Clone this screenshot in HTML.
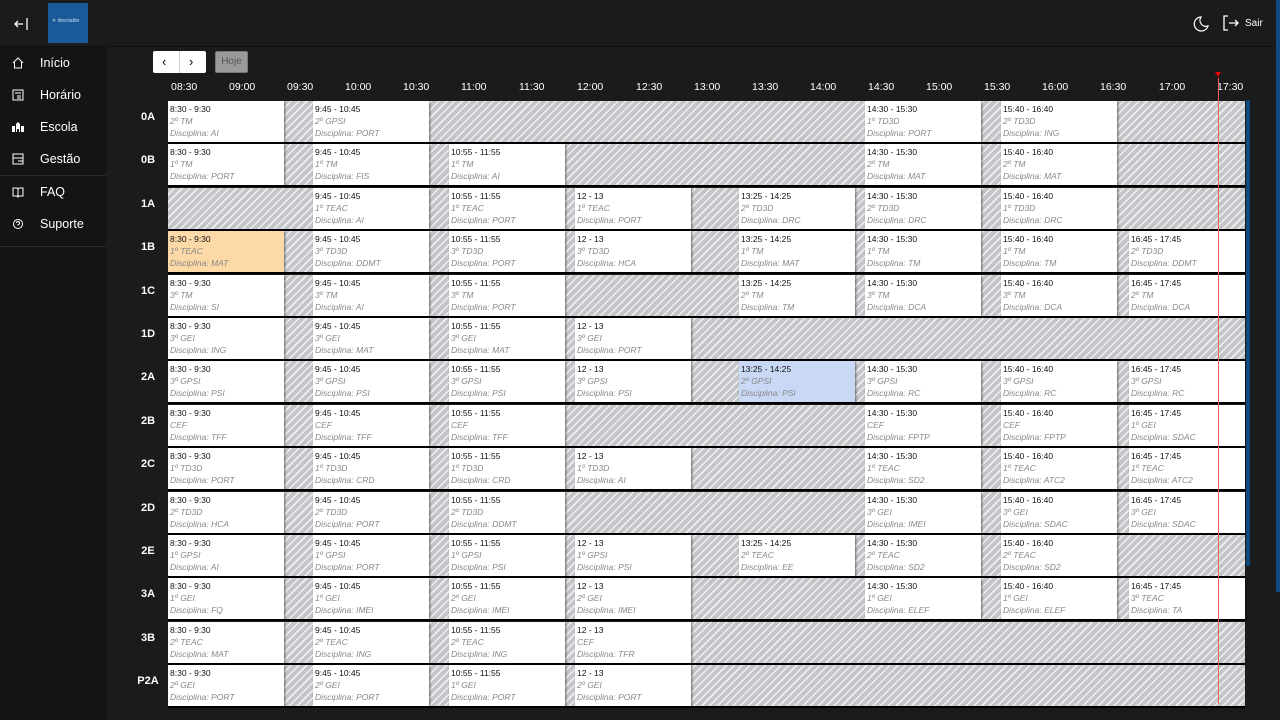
<!DOCTYPE html>
<html><head><meta charset="utf-8"><style>
*{margin:0;padding:0;box-sizing:border-box}
body{width:1280px;height:720px;background:#1b1b1b;font-family:"Liberation Sans",sans-serif;position:relative;overflow:hidden;color:#fff}
.top{position:absolute;left:0;top:0;width:1280px;height:47px;background:#1b1b1b;border-bottom:1px solid #111}
.side{position:absolute;left:0;top:47px;width:106px;height:673px;background:#141414}
.nav{position:absolute;left:0;width:106px;height:32px;font-size:12.5px;color:#fff}
.nav span{position:absolute;left:40px;top:9px}
.nav svg{position:absolute;left:12px;top:10px}
.logo{position:absolute;left:48px;top:3px;width:40px;height:40px;background:#1a5a9a}
.btn{position:absolute;top:51px;height:22px;background:#fff;border-radius:2px}
.tl{position:absolute;top:81px;font-size:10.5px;color:#fff}
.row{position:absolute;left:168px;width:1077px;height:41px;background:repeating-linear-gradient(135deg,#c3c5c8 0 4px,#eef0f2 4px 5.5px);box-shadow:0 2px 0 #000}
.lb{position:absolute;left:128px;width:40px;text-align:center;font-size:11px;font-weight:bold;color:#fff}
.b{position:absolute;top:0;height:41px;width:116px;background:#fff;box-shadow:1px 1px 2px rgba(0,0,0,.5);font-size:8.5px;line-height:12px;padding:2px 0 0 2px;color:#888;font-style:italic;white-space:nowrap;overflow:hidden}
.b b{display:block;color:#111;font-style:normal;font-weight:normal}
.A{left:0}.B{left:145px}.C{left:281px}.D{left:407px}.E{left:571px}.F{left:697px}.G{left:833px}.H{left:961px}
.o{background:#fdd9a8}.u{background:#c9d8f5}
</style></head><body>
<div class="top">
<svg style="position:absolute;left:13px;top:16px" width="16" height="16" viewBox="0 0 16 16" fill="none" stroke="#fff" stroke-width="1.3"><path d="M10 8H2M5 5L2 8l3 3M14 2v12"/></svg>
<div class="logo"><div style="position:absolute;left:4px;top:15px;font-size:5px;color:#cde">✕ directable</div></div>
<svg style="position:absolute;left:1192px;top:15px" width="18" height="18" viewBox="0 0 18 18" fill="none" stroke="#fff" stroke-width="1.2"><path d="M9 2a7 7 0 1 0 7 9A6 6 0 0 1 9 2z"/></svg>
<svg style="position:absolute;left:1223px;top:15px" width="16" height="16" viewBox="0 0 16 16" fill="none" stroke="#fff" stroke-width="1.3"><path d="M5 1H1v14h4M6 8h9M12 5l3 3-3 3"/></svg>
<div style="position:absolute;left:1245px;top:18px;font-size:10px">Sair</div>
</div>
<div class="side">
<div class="nav" style="top:0"><svg width="12" height="12" viewBox="0 0 12 12" fill="none" stroke="#fff"><path d="M1 6L6 1l5 5M2.5 5v6h7V5"/></svg><span>Início</span></div>
<div class="nav" style="top:32px"><svg width="12" height="12" viewBox="0 0 12 12" fill="none" stroke="#fff"><rect x="1" y="1" width="10" height="10"/><path d="M3 4h6M5 7h4M5 9h4"/></svg><span>Horário</span></div>
<div class="nav" style="top:64px"><svg width="12" height="12" viewBox="0 0 12 12" fill="#fff"><path d="M0 5h3v6H0zM9 5h3v6H9zM4 3l2-2 2 2v8H7V8H5v3H4z"/></svg><span>Escola</span></div>
<div class="nav" style="top:96px"><svg width="12" height="12" viewBox="0 0 12 12" fill="none" stroke="#fff"><rect x="1" y="1" width="10" height="10"/><path d="M1 5h10M6 8h5"/></svg><span>Gestão</span></div>
<div style="position:absolute;left:0;top:128px;width:106px;height:1px;background:#2a2a2a"></div>
<div class="nav" style="top:129px"><svg width="12" height="12" viewBox="0 0 12 12" fill="none" stroke="#fff"><path d="M1 2h4l1 1 1-1h4v8H7l-1 1-1-1H1zM6 3v8"/></svg><span>FAQ</span></div>
<div class="nav" style="top:161px"><svg width="12" height="12" viewBox="0 0 12 12" fill="none" stroke="#fff"><circle cx="6" cy="6" r="4.5"/><path d="M4.5 5a1.5 1.5 0 1 1 1.5 1.5V7.5"/></svg><span>Suporte</span></div>
<div style="position:absolute;left:0;top:199px;width:106px;height:1px;background:#2a2a2a"></div>
</div>
<div class="btn" style="left:153px;width:53px"><div style="position:absolute;left:26px;top:0;width:1px;height:22px;background:#ccc"></div><span style="position:absolute;left:9px;top:3px;color:#000;font-size:13px">‹</span><span style="position:absolute;left:36px;top:3px;color:#000;font-size:13px">›</span></div>
<div class="btn" style="left:215px;width:33px;background:#9a9a9a;border:1px solid #777;font-size:10px;color:#555;text-align:center;line-height:20px">Hoje</div>
<div class="tl" style="left:171px">08:30</div><div class="tl" style="left:229px">09:00</div><div class="tl" style="left:287px">09:30</div><div class="tl" style="left:345px">10:00</div><div class="tl" style="left:403px">10:30</div><div class="tl" style="left:461px">11:00</div><div class="tl" style="left:519px">11:30</div><div class="tl" style="left:577px">12:00</div><div class="tl" style="left:636px">12:30</div><div class="tl" style="left:694px">13:00</div><div class="tl" style="left:752px">13:30</div><div class="tl" style="left:810px">14:00</div><div class="tl" style="left:868px">14:30</div><div class="tl" style="left:926px">15:00</div><div class="tl" style="left:984px">15:30</div><div class="tl" style="left:1042px">16:00</div><div class="tl" style="left:1100px">16:30</div><div class="tl" style="left:1159px">17:00</div><div class="tl" style="left:1217px">17:30</div>
<div style="position:absolute;left:1215px;top:72px;width:0;height:0;border-left:3.5px solid transparent;border-right:3.5px solid transparent;border-top:5px solid #e00"></div>

<div class="lb" style="top:111px">0A</div>
<div class="row" style="top:101px">
<div class="b A"><b>8:30 - 9:30</b>2º TM<br>Disciplina: AI</div>
<div class="b B"><b>9:45 - 10:45</b>2º GPSI<br>Disciplina: PORT</div>
<div class="b F"><b>14:30 - 15:30</b>1º TD3D<br>Disciplina: PORT</div>
<div class="b G"><b>15:40 - 16:40</b>2º TD3D<br>Disciplina: ING</div>
</div>
<div class="lb" style="top:154px">0B</div>
<div class="row" style="top:144px">
<div class="b A"><b>8:30 - 9:30</b>1º TM<br>Disciplina: PORT</div>
<div class="b B"><b>9:45 - 10:45</b>1º TM<br>Disciplina: FIS</div>
<div class="b C"><b>10:55 - 11:55</b>1º TM<br>Disciplina: AI</div>
<div class="b F"><b>14:30 - 15:30</b>2º TM<br>Disciplina: MAT</div>
<div class="b G"><b>15:40 - 16:40</b>2º TM<br>Disciplina: MAT</div>
</div>
<div class="lb" style="top:198px">1A</div>
<div class="row" style="top:188px">
<div class="b B"><b>9:45 - 10:45</b>1º TEAC<br>Disciplina: AI</div>
<div class="b C"><b>10:55 - 11:55</b>1º TEAC<br>Disciplina: PORT</div>
<div class="b D"><b>12 - 13</b>1º TEAC<br>Disciplina: PORT</div>
<div class="b E"><b>13:25 - 14:25</b>2º TD3D<br>Disciplina: DRC</div>
<div class="b F"><b>14:30 - 15:30</b>2º TD3D<br>Disciplina: DRC</div>
<div class="b G"><b>15:40 - 16:40</b>1º TD3D<br>Disciplina: DRC</div>
</div>
<div class="lb" style="top:241px">1B</div>
<div class="row" style="top:231px">
<div class="b A o"><b>8:30 - 9:30</b>1º TEAC<br>Disciplina: MAT</div>
<div class="b B"><b>9:45 - 10:45</b>3º TD3D<br>Disciplina: DDMT</div>
<div class="b C"><b>10:55 - 11:55</b>3º TD3D<br>Disciplina: PORT</div>
<div class="b D"><b>12 - 13</b>3º TD3D<br>Disciplina: HCA</div>
<div class="b E"><b>13:25 - 14:25</b>1º TM<br>Disciplina: MAT</div>
<div class="b F"><b>14:30 - 15:30</b>1º TM<br>Disciplina: TM</div>
<div class="b G"><b>15:40 - 16:40</b>1º TM<br>Disciplina: TM</div>
<div class="b H"><b>16:45 - 17:45</b>2º TD3D<br>Disciplina: DDMT</div>
</div>
<div class="lb" style="top:285px">1C</div>
<div class="row" style="top:275px">
<div class="b A"><b>8:30 - 9:30</b>3º TM<br>Disciplina: SI</div>
<div class="b B"><b>9:45 - 10:45</b>3º TM<br>Disciplina: AI</div>
<div class="b C"><b>10:55 - 11:55</b>3º TM<br>Disciplina: PORT</div>
<div class="b E"><b>13:25 - 14:25</b>2º TM<br>Disciplina: TM</div>
<div class="b F"><b>14:30 - 15:30</b>3º TM<br>Disciplina: DCA</div>
<div class="b G"><b>15:40 - 16:40</b>3º TM<br>Disciplina: DCA</div>
<div class="b H"><b>16:45 - 17:45</b>2º TM<br>Disciplina: DCA</div>
</div>
<div class="lb" style="top:328px">1D</div>
<div class="row" style="top:318px">
<div class="b A"><b>8:30 - 9:30</b>3º GEI<br>Disciplina: ING</div>
<div class="b B"><b>9:45 - 10:45</b>3º GEI<br>Disciplina: MAT</div>
<div class="b C"><b>10:55 - 11:55</b>3º GEI<br>Disciplina: MAT</div>
<div class="b D"><b>12 - 13</b>3º GEI<br>Disciplina: PORT</div>
</div>
<div class="lb" style="top:371px">2A</div>
<div class="row" style="top:361px">
<div class="b A"><b>8:30 - 9:30</b>3º GPSI<br>Disciplina: PSI</div>
<div class="b B"><b>9:45 - 10:45</b>3º GPSI<br>Disciplina: PSI</div>
<div class="b C"><b>10:55 - 11:55</b>3º GPSI<br>Disciplina: PSI</div>
<div class="b D"><b>12 - 13</b>3º GPSI<br>Disciplina: PSI</div>
<div class="b E u"><b>13:25 - 14:25</b>2º GPSI<br>Disciplina: PSI</div>
<div class="b F"><b>14:30 - 15:30</b>3º GPSI<br>Disciplina: RC</div>
<div class="b G"><b>15:40 - 16:40</b>3º GPSI<br>Disciplina: RC</div>
<div class="b H"><b>16:45 - 17:45</b>3º GPSI<br>Disciplina: RC</div>
</div>
<div class="lb" style="top:415px">2B</div>
<div class="row" style="top:405px">
<div class="b A"><b>8:30 - 9:30</b>CEF<br>Disciplina: TFF</div>
<div class="b B"><b>9:45 - 10:45</b>CEF<br>Disciplina: TFF</div>
<div class="b C"><b>10:55 - 11:55</b>CEF<br>Disciplina: TFF</div>
<div class="b F"><b>14:30 - 15:30</b>CEF<br>Disciplina: FPTP</div>
<div class="b G"><b>15:40 - 16:40</b>CEF<br>Disciplina: FPTP</div>
<div class="b H"><b>16:45 - 17:45</b>1º GEI<br>Disciplina: SDAC</div>
</div>
<div class="lb" style="top:458px">2C</div>
<div class="row" style="top:448px">
<div class="b A"><b>8:30 - 9:30</b>1º TD3D<br>Disciplina: PORT</div>
<div class="b B"><b>9:45 - 10:45</b>1º TD3D<br>Disciplina: CRD</div>
<div class="b C"><b>10:55 - 11:55</b>1º TD3D<br>Disciplina: CRD</div>
<div class="b D"><b>12 - 13</b>1º TD3D<br>Disciplina: AI</div>
<div class="b F"><b>14:30 - 15:30</b>1º TEAC<br>Disciplina: SD2</div>
<div class="b G"><b>15:40 - 16:40</b>1º TEAC<br>Disciplina: ATC2</div>
<div class="b H"><b>16:45 - 17:45</b>1º TEAC<br>Disciplina: ATC2</div>
</div>
<div class="lb" style="top:502px">2D</div>
<div class="row" style="top:492px">
<div class="b A"><b>8:30 - 9:30</b>2º TD3D<br>Disciplina: HCA</div>
<div class="b B"><b>9:45 - 10:45</b>2º TD3D<br>Disciplina: PORT</div>
<div class="b C"><b>10:55 - 11:55</b>2º TD3D<br>Disciplina: DDMT</div>
<div class="b F"><b>14:30 - 15:30</b>3º GEI<br>Disciplina: IMEI</div>
<div class="b G"><b>15:40 - 16:40</b>3º GEI<br>Disciplina: SDAC</div>
<div class="b H"><b>16:45 - 17:45</b>3º GEI<br>Disciplina: SDAC</div>
</div>
<div class="lb" style="top:545px">2E</div>
<div class="row" style="top:535px">
<div class="b A"><b>8:30 - 9:30</b>1º GPSI<br>Disciplina: AI</div>
<div class="b B"><b>9:45 - 10:45</b>1º GPSI<br>Disciplina: PORT</div>
<div class="b C"><b>10:55 - 11:55</b>1º GPSI<br>Disciplina: PSI</div>
<div class="b D"><b>12 - 13</b>1º GPSI<br>Disciplina: PSI</div>
<div class="b E"><b>13:25 - 14:25</b>2º TEAC<br>Disciplina: EE</div>
<div class="b F"><b>14:30 - 15:30</b>2º TEAC<br>Disciplina: SD2</div>
<div class="b G"><b>15:40 - 16:40</b>2º TEAC<br>Disciplina: SD2</div>
</div>
<div class="lb" style="top:588px">3A</div>
<div class="row" style="top:578px">
<div class="b A"><b>8:30 - 9:30</b>1º GEI<br>Disciplina: FQ</div>
<div class="b B"><b>9:45 - 10:45</b>1º GEI<br>Disciplina: IMEI</div>
<div class="b C"><b>10:55 - 11:55</b>2º GEI<br>Disciplina: IMEI</div>
<div class="b D"><b>12 - 13</b>2º GEI<br>Disciplina: IMEI</div>
<div class="b F"><b>14:30 - 15:30</b>1º GEI<br>Disciplina: ELEF</div>
<div class="b G"><b>15:40 - 16:40</b>1º GEI<br>Disciplina: ELEF</div>
<div class="b H"><b>16:45 - 17:45</b>3º TEAC<br>Disciplina: TA</div>
</div>
<div class="lb" style="top:632px">3B</div>
<div class="row" style="top:622px">
<div class="b A"><b>8:30 - 9:30</b>2º TEAC<br>Disciplina: MAT</div>
<div class="b B"><b>9:45 - 10:45</b>2º TEAC<br>Disciplina: ING</div>
<div class="b C"><b>10:55 - 11:55</b>2º TEAC<br>Disciplina: ING</div>
<div class="b D"><b>12 - 13</b>CEF<br>Disciplina: TFR</div>
</div>
<div class="lb" style="top:675px">P2A</div>
<div class="row" style="top:665px">
<div class="b A"><b>8:30 - 9:30</b>2º GEI<br>Disciplina: PORT</div>
<div class="b B"><b>9:45 - 10:45</b>2º GEI<br>Disciplina: PORT</div>
<div class="b C"><b>10:55 - 11:55</b>1º GEI<br>Disciplina: PORT</div>
<div class="b D"><b>12 - 13</b>2º GEI<br>Disciplina: PORT</div>
</div>
<div style="position:absolute;left:1218px;top:78px;width:1px;height:626px;background:#f06060"></div>
<div style="position:absolute;left:1246px;top:100px;width:4px;height:466px;background:#0e4a7e;border-radius:2px"></div>
<div style="position:absolute;left:1276px;top:0;width:4px;height:592px;background:#0e4a7e"></div>
</body></html>
